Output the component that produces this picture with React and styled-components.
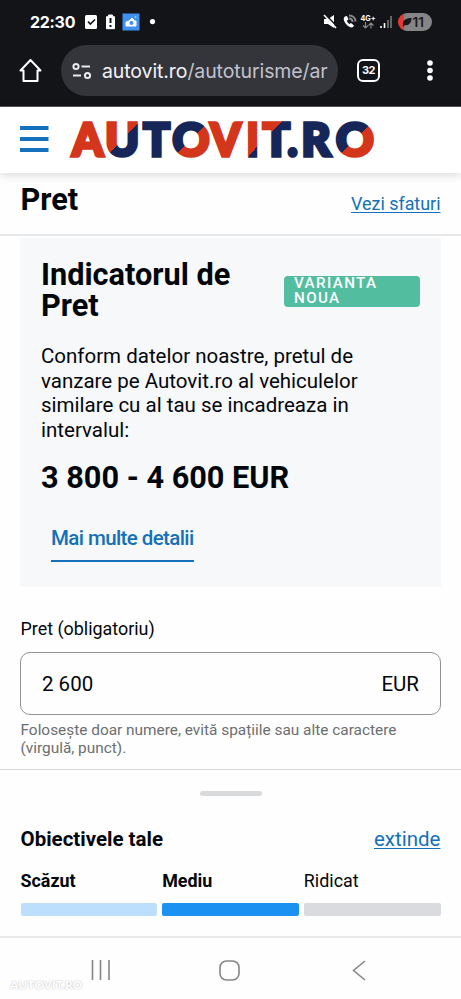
import React from "react";
import styled, { createGlobalStyle } from "styled-components";

const GlobalStyle = createGlobalStyle`
  * { box-sizing: border-box; }
  body { margin: 0; background: #fff; color: #03060a; font-family: Roboto, sans-serif; }
  h1, h2, p { margin: 0; }
`;

const Screen = styled.main`
  width: 461px;
  height: 999px;
  overflow: hidden;
  display: flex;
  flex-direction: column;
  background: #fefefe;
`;

const StatusBar = styled.div`
  height: 44px;
  flex: none;
  display: flex;
  align-items: center;
  justify-content: space-between;
  padding: 0 29.5px 0 30px;
  background: #131418;
  color: #fff;
`;

const Clock = styled.span`
  width: 54px;
  font: 700 16px/20px Inter, sans-serif;
  letter-spacing: -0.3px;
`;

const IconGroup = styled.div`
  display: flex;
  align-items: center;
  height: 24px;
`;

const Icon = styled.svg`
  display: block;
  flex: none;
  overflow: visible;
`;

const NetworkLabel = styled.div`
  width: 15px;
  margin-right: 4px;
  display: flex;
  flex-direction: column;
  align-items: center;
  font: 700 7.2px/7px Inter, sans-serif;
`;

const Battery = styled.div`
  width: 34px;
  height: 18px;
  display: flex;
  align-items: center;
  gap: 1px;
  padding-left: 4px;
  border-radius: 9px;
  background: linear-gradient(90deg, #e8382f 0 6px, #858487 6px);
  color: #191a1d;
  font: 600 13.5px/18px Inter, sans-serif;
`;

const BrowserBar = styled.div`
  height: 62.5px;
  flex: none;
  display: flex;
  align-items: flex-start;
  padding-left: 19px;
  background: #131418;
  border-bottom: 1px solid #55565a;
  color: #f5f5f7;
`;

const AddressBar = styled.div`
  width: 277px;
  flex: none;
  height: 51px;
  margin: 1px 19px 0 19px;
  display: flex;
  align-items: center;
  padding: 0 8px 0 11px;
  border-radius: 26px;
  background: #34353b;
`;

const Address = styled.div`
  width: 228px;
  margin-left: 11px;
  overflow: hidden;
  white-space: nowrap;
  font: 400 19.5px/26px Inter, sans-serif;
  letter-spacing: -0.1px;
  color: #c2c1ce;
`;

const Domain = styled.span`
  color: #f4f3fa;
`;

const Tabs = styled.div`
  width: 23px;
  flex: none;
  height: 23px;
  margin-top: 15px;
  border: 2px solid #fff;
  border-radius: 6px;
  font: 700 11px/19px Inter, sans-serif;
  letter-spacing: -0.4px;
  text-align: center;
  color: #fff;
`;

const SiteHeader = styled.header`
  position: relative;
  height: 66.5px;
  flex: none;
  display: flex;
  align-items: center;
  padding-left: 20px;
  background: #fff;
  box-shadow: 0 2px 9px rgba(0, 10, 30, 0.15);
`;

const Logo = styled.svg`
  display: block;
  margin-left: 21.5px;
  font-family: Lato, sans-serif;
  font-weight: 900;
  overflow: visible;
`;

const TitleRow = styled.div`
  height: 62.5px;
  flex: none;
  display: flex;
  justify-content: space-between;
  padding: 0 20.5px;
  border-bottom: 2px solid #e7e8ea;
`;

const Heading = styled.h1`
  font-size: 30.7px;
  line-height: 31px;
  font-weight: 700;
  padding-top: ${(p) => p.$top || 0}px;
`;

const TextLink = styled.a`
  color: #1471b9;
  text-decoration: underline;
  text-decoration-thickness: 1.3px;
  text-underline-offset: 2px;
  font-size: ${(p) => p.$size}px;
  line-height: 22px;
  margin-top: ${(p) => p.$top || 0}px;
`;

const Card = styled.section`
  height: 349px;
  flex: none;
  margin: 2px 20.5px 0 20px;
  padding: 21px 20.5px 0 21px;
  background: #f6f8fa;
`;

const CardTop = styled.div`
  height: 85.5px;
  display: flex;
  justify-content: space-between;
`;

const Badge = styled.div`
  width: 136px;
  height: 31px;
  margin-top: 17px;
  padding-left: 10px;
  border-radius: 4px;
  background: #52be9f;
  color: #fff;
  font-size: 15.2px;
  font-weight: 500;
  line-height: 15.4px;
  letter-spacing: 1.35px;
`;

const Paragraph = styled.p`
  font-size: 20.5px;
  line-height: 24.5px;
  white-space: nowrap;
`;

const Price = styled.p`
  margin-top: 20px;
  font-size: 30.7px;
  line-height: 31px;
  font-weight: 700;
`;

const DetailsLink = styled.a`
  display: inline-block;
  margin: 33.5px 0 0 10px;
  padding-bottom: 11px;
  border-bottom: 2.4px solid #1471b9;
  color: #1471b9;
  font-size: 20.5px;
  line-height: 22px;
  font-weight: 500;
  letter-spacing: -0.6px;
`;

const Field = styled.section`
  height: 182px;
  flex: none;
  padding: 31px 20.5px 0;
`;

const FieldLabel = styled.label`
  display: block;
  font-size: 17.9px;
  line-height: 22px;
`;

const InputBox = styled.div`
  height: 63.5px;
  margin: 12px 0 0 -0.5px;
  display: flex;
  align-items: center;
  justify-content: space-between;
  padding: 1px 20.5px 0 21px;
  border: 1px solid #929395;
  border-radius: 10px;
  font-size: 20.5px;
`;

const Hint = styled.p`
  margin-top: 5.5px;
  font-size: 15.4px;
  line-height: 18.2px;
  color: #6c6e70;
`;

const Goals = styled.section`
  height: 169px;
  flex: none;
  padding: 0 20.5px;
  border-top: 1px solid #d6d7d9;
  border-bottom: 2px solid #e9e9ea;
`;

const Handle = styled.div`
  width: 62px;
  height: 5px;
  margin: 21px auto 0;
  border-radius: 3px;
  background: #d9dadc;
`;

const GoalsHead = styled.div`
  height: 24px;
  margin-top: 31px;
  display: flex;
  align-items: center;
  justify-content: space-between;
`;

const GoalsTitle = styled.h2`
  font-size: 20.5px;
  font-weight: 700;
  line-height: 24px;
`;

const Levels = styled.div`
  display: grid;
  grid-template-columns: repeat(3, 1fr);
  gap: 5px;
  margin-top: 19.5px;
`;

const Level = styled.div`
  font-size: 17.9px;
  line-height: 22px;
  font-weight: ${(p) => (p.$strong ? 700 : 400)};

  &::after {
    content: "";
    display: block;
    height: 13px;
    margin-top: 11px;
    border-radius: 2px;
    background: ${(p) => p.$color};
  }
`;

const NavBar = styled.nav`
  position: relative;
  flex: 1;
  display: flex;
  justify-content: space-between;
  align-items: flex-start;
  padding: 22px 95px 0 91px;
`;

const HomeButton = styled.span`
  margin-right: 4px;
`;

const Watermark = styled.span`
  position: absolute;
  left: 10px;
  bottom: 6px;
  font: 900 12px/16px Lato, sans-serif;
  color: #fff;
  text-shadow: 0 0 1.5px #aaa;
`;

const RED = "#d3361b";
const NAVY = "#172659";

const GLYPH_SIZE = 46.4;
const GLYPH_STROKE = 3.6;

// Wordmark letters: left and right edge in the logo, ink extent in em, fill
const letters = [
  ["A", 0, 35.5, -0.01, 0.72, RED],
  ["U", 36.3, 68, 0.06, 0.68, "url(#uTone)"],
  ["T", 72, 101, 0.01, 0.59, NAVY],
  ["O", 102, 139.7, 0.03, 0.78, "url(#oTone)"],
  ["V", 138.3, 173, -0.01, 0.72, RED],
  ["I", 177.7, 187.2, 0.07, 0.23, "url(#iTone)"],
  ["T", 191.5, 221, 0.01, 0.59, "url(#tTone)"],
  [".", 217, 228, 0.03, 0.21, NAVY],
  ["R", 232.8, 262.7, 0.07, 0.66, NAVY],
  ["O", 265.5, 304, 0.03, 0.78, "url(#oTone)"],
];

// Two flat colours that meet on a diagonal through (cx, cy)
function Tone({ id, cx, cy, from, to }) {
  return (
    <linearGradient id={id} gradientUnits="userSpaceOnUse" x1={cx - 20} y1={cy - 20} x2={cx + 20} y2={cy + 20}>
      <stop offset="0.5" stopColor={from} />
      <stop offset="0.5" stopColor={to} />
    </linearGradient>
  );
}

function Wordmark() {
  return (
    <Logo width="304" height="38" viewBox="0 0 304 38" aria-label="AUTOVIT.RO">
      <defs>
        <Tone id="uTone" cx={17.2} cy={-16.5} from={RED} to={NAVY} />
        <Tone id="oTone" cx={18.8} cy={-16.7} from={NAVY} to={RED} />
        <Tone id="iTone" cx={7} cy={-4.5} from={RED} to={NAVY} />
        <Tone id="tTone" cx={13.9} cy={-29} from={RED} to={NAVY} />
      </defs>
      {letters.map(([char, left, right, inkLeft, inkRight, fill], i) => {
        const scale = (right - left) / ((inkRight - inkLeft) * GLYPH_SIZE + GLYPH_STROKE);
        const x = left - scale * (inkLeft * GLYPH_SIZE - GLYPH_STROKE / 2);
        return (
          <text
            key={i}
            transform={`translate(${x} 35.4) scale(${scale} 1)`}
            fontSize={GLYPH_SIZE}
            fill={fill}
            stroke={fill}
            strokeWidth={GLYPH_STROKE}
          >
            {char}
          </text>
        );
      })}
    </Logo>
  );
}

export default function App() {
  return (
    <>
      <GlobalStyle />
      <Screen>
        <StatusBar>
          <IconGroup>
            <Clock>22:30</Clock>
            <Icon width="72" height="18" viewBox="0 0 72 18">
              <rect x="1" y="2" width="12" height="14" rx="1.5" fill="#fff" />
              <path d="m4 8.5 2.3 2.5L11 6.5" fill="none" stroke="#131418" strokeWidth="1.6" />
              <path d="M24.5 2h4v1.7h2v12h-8V3.7h2z" fill="#fff" stroke="#fff" strokeLinejoin="round" />
              <path d="M26.5 5v5M26.5 12v2" stroke="#131418" strokeWidth="2" />
              <rect x="38.5" y=".5" width="17" height="17" fill="#3e91ef" />
              <path d="M42 13V9l3-1 3-3 2 2v1h2v5z" fill="#fff" stroke="#fff" strokeLinejoin="round" />
              <circle cx="47.5" cy="10" r="2" fill="#3e91ef" />
              <circle cx="51.5" cy="4" r="1" fill="#72e2ed" />
              <circle cx="68.5" cy="8.6" r="2.6" fill="#fff" />
            </Icon>
          </IconGroup>
          <IconGroup>
            <Icon width="37" height="18" viewBox="0 0 37 18">
              <path d="M0 6h4l6-4v13l-6-4H0z" fill="#fff" />
              <path d="M1 1 13 13.5" stroke="#131418" strokeWidth="1.5" />
              <path d="m0 2 12 13" stroke="#fff" strokeWidth="1.6" />
              <path d="M21 3.5c-2 1-1.5 4.5 1 7.5s5.5 4 7 3l1-1.5-3-2.5-1.5 1c-1.5-.8-2.5-2.3-2.5-3.5l1.5-1-1.5-3.5z" fill="#fff" />
              <path d="M25 2.5c4 0 6.5 2.500 6.500 6M25 5.5c2.500 0 3.500 1.500 3.500 3.500" fill="none" stroke="#88898c" strokeWidth="2" />
            </Icon>
            <NetworkLabel>
              4G+
              <Icon width="12" height="7" viewBox="0 0 12 7">
                <path d="M3.5 0v6M1 3.5 3.5 6 6 3.5M9 6.5V1M6.5 3.5 9 1l2.5 2.5" fill="none" stroke="#87888b" strokeWidth="1.2" />
              </Icon>
            </NetworkLabel>
            <Icon width="18" height="14" viewBox="0 0 18 14">
              <path d="M1 11v2M4.5 8v5" stroke="#fff" strokeWidth="1.6" />
              <path d="M8 5v8M11 1v12" stroke="#77787b" strokeWidth="1.6" />
            </Icon>
            <Battery>
              <Icon width="10" height="10" viewBox="0 0 10 10">
                <path d="M1 9C0 3 4 1 9.5 1 9.5 6 6.5 9 3 8L1 10z" fill="#191a1d" />
              </Icon>
              11
            </Battery>
          </IconGroup>
        </StatusBar>

        <BrowserBar>
          <Icon width="23" height="52" viewBox="0 0 23 52">
            <path d="M1.5 26.5 11.5 16l10 10.5h-3V37h-14V26.5z" fill="none" stroke="#fff" strokeWidth="2" strokeLinejoin="round" />
          </Icon>
          <AddressBar>
            <Icon width="19" height="18" viewBox="0 0 19 18" fill="none" stroke="#e9e8ee" strokeWidth="2">
              <circle cx="4" cy="4.500" r="2.600" />
              <path d="M9.500 4.500H18M1 13.500h8" />
              <circle cx="15.500" cy="13.500" r="2.600" />
            </Icon>
            <Address><Domain>autovit.ro</Domain>/autoturisme/ar</Address>
          </AddressBar>
          <Tabs>32</Tabs>
          <Icon width="100" height="52" viewBox="0 0 100 52" fill="#fff">
            <circle cx="50" cy="19" r="2.8" />
            <circle cx="50" cy="26.5" r="2.8" />
            <circle cx="50" cy="34" r="2.8" />
          </Icon>
        </BrowserBar>

        <SiteHeader>
          <Icon width="28.5" height="27" viewBox="0 0 28.5 27">
            <path d="M0 2h28.5M0 13h28.5M0 24h28.5" stroke="#1471bd" strokeWidth="3.8" />
          </Icon>
          <Wordmark />
        </SiteHeader>

        <TitleRow>
          <Heading $top={10.5}>Pret</Heading>
          <TextLink $size={17.9} $top={20}>Vezi sfaturi</TextLink>
        </TitleRow>

        <Card>
          <CardTop>
            <Heading as="h2">Indicatorul de<br />Pret</Heading>
            <Badge>VARIANTA<br />NOUA</Badge>
          </CardTop>
          <Paragraph>
            Conform datelor noastre, pretul de<br />
            vanzare pe Autovit.ro al vehiculelor<br />
            similare cu al tau se incadreaza in<br />
            intervalul:
          </Paragraph>
          <Price>3 800 - 4 600 EUR</Price>
          <DetailsLink>Mai multe detalii</DetailsLink>
        </Card>

        <Field>
          <FieldLabel>Pret (obligatoriu)</FieldLabel>
          <InputBox><span>2 600</span><span>EUR</span></InputBox>
          <Hint>Folosește doar numere, evită spațiile sau alte caractere<br />(virgulă, punct).</Hint>
        </Field>

        <Goals>
          <Handle />
          <GoalsHead>
            <GoalsTitle>Obiectivele tale</GoalsTitle>
            <TextLink $size={20.5}>extinde</TextLink>
          </GoalsHead>
          <Levels>
            <Level $strong $color="#bbdffd">Scăzut</Level>
            <Level $strong $color="#1b91f2">Mediu</Level>
            <Level $color="#dadbdf">Ridicat</Level>
          </Levels>
        </Goals>

        <NavBar>
          <Icon width="20" height="20" viewBox="0 0 20 20">
            <path d="M1.5 0v20M9.5 0v20M18 0v20" stroke="#858688" strokeWidth="1.6" />
          </Icon>
          <HomeButton>
            <Icon width="21" height="21" viewBox="0 0 21 21">
              <rect x="1" y="1" width="19" height="19" rx="6.5" fill="none" stroke="#858688" strokeWidth="1.6" />
            </Icon>
          </HomeButton>
          <Icon width="14" height="21" viewBox="0 0 14 21">
            <path d="M13 1 1.5 10.5 13 20" fill="none" stroke="#858688" strokeWidth="1.6" />
          </Icon>
          <Watermark>AUTOVIT.RO</Watermark>
        </NavBar>
      </Screen>
    </>
  );
}
